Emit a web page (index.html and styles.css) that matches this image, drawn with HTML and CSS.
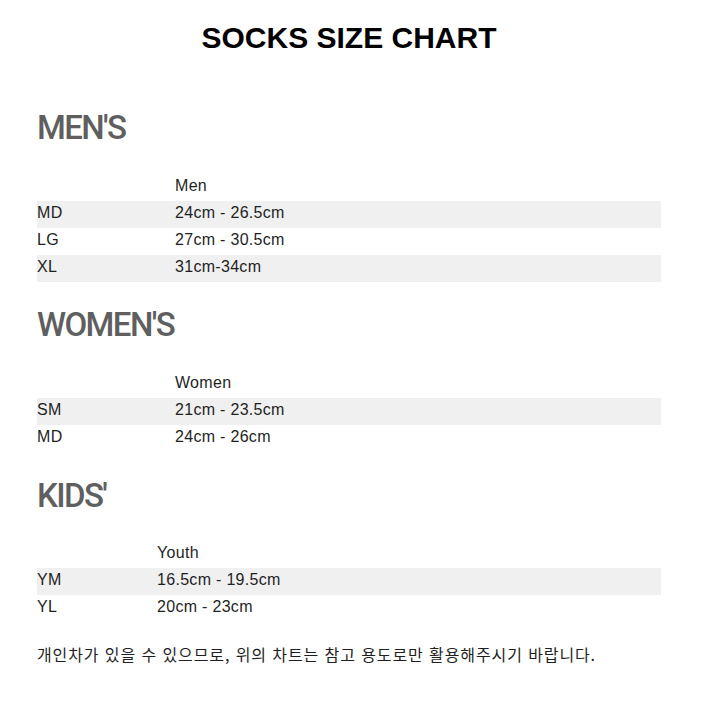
FILE: index.html
```html
<!DOCTYPE html>
<html lang="ko">
<head>
<meta charset="utf-8">
<title>Socks Size Chart</title>
<link rel="stylesheet" href="styles.css">
</head>
<body>
<main class="page">
  <h1 class="title">SOCKS SIZE CHART</h1>

  <h2 class="section">MEN'S</h2>
  <div class="chart">
    <div class="row head"><span></span><span>Men</span></div>
    <div class="row alt"><span>MD</span><span>24cm - 26.5cm</span></div>
    <div class="row"><span>LG</span><span>27cm - 30.5cm</span></div>
    <div class="row alt"><span>XL</span><span>31cm-34cm</span></div>
  </div>

  <h2 class="section">WOMEN'S</h2>
  <div class="chart">
    <div class="row head"><span></span><span>Women</span></div>
    <div class="row alt"><span>SM</span><span>21cm - 23.5cm</span></div>
    <div class="row"><span>MD</span><span>24cm - 26cm</span></div>
  </div>

  <h2 class="section kids-title">KIDS'</h2>
  <div class="chart kids">
    <div class="row head"><span></span><span>Youth</span></div>
    <div class="row alt"><span>YM</span><span>16.5cm - 19.5cm</span></div>
    <div class="row"><span>YL</span><span>20cm - 23cm</span></div>
  </div>

  <p class="note">개인차가 있을 수 있으므로, 위의 차트는 참고 용도로만 활용해주시기 바랍니다.</p>
</main>
</body>
</html>
```

FILE: styles.css
```css
html, body {
  margin: 0;
  padding: 0;
  background: #ffffff;
}

.page {
  width: 624px;
  margin-left: 37px;
  font-family: "Liberation Sans", Arial, sans-serif;
  color: #1f1f1f;
  display: flex;
  flex-direction: column;
}

.title {
  margin: 22px 0 0 0;
  font-size: 30px;
  line-height: 32px;
  font-weight: 700;
  color: #000;
  text-align: center;
}

.section {
  margin: 23px 0 0 0;
  font-family: Roboto, "Liberation Sans", sans-serif;
  font-size: 33px;
  line-height: 40px;
  font-weight: 500;
  letter-spacing: -1.6px;
  color: #5f5f5f;
}

.page .title + .section {
  margin-top: 54px;
}

.chart {
  margin-top: 26px;
  display: flex;
  flex-direction: column;
}

.row {
  display: grid;
  grid-template-columns: 138px 1fr;
  height: 27px;
  box-sizing: border-box;
  padding-bottom: 3px;
  font-size: 16px;
  line-height: 24px;
  letter-spacing: 0.3px;
}

.kids .row {
  grid-template-columns: 120px 1fr;
}

.row.alt {
  background: #f0f0f0;
}

.kids-title {
  margin-top: 24px;
}

.kids {
  margin-top: 25px;
}

.note {
  margin: 19px 0 0 0;
  font-family: "Noto Sans CJK KR", "Liberation Sans", sans-serif;
  font-size: 16px;
  line-height: 27px;
  letter-spacing: 0.9px;
  color: #1f1f1f;
}
```
